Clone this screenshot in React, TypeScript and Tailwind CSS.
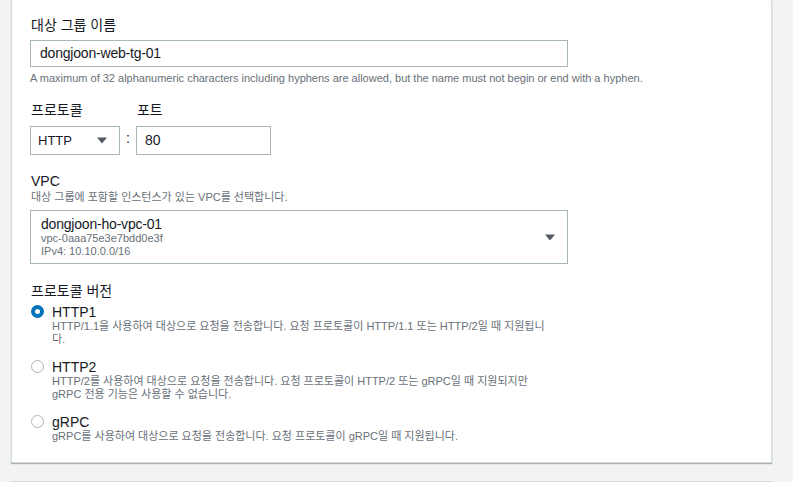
const font = { fontFamily: '"Liberation Sans", "Noto Sans CJK KR", sans-serif' }

function Caret() {
  return (
    <svg width="10" height="7" viewBox="0 0 10 7" className="shrink-0">
      <path d="M0 0.5 L10 0.5 L5 6.5 Z" fill="#545b64" />
    </svg>
  )
}

function Radio({ checked }: { checked?: boolean }) {
  return checked ? (
    <span className="mt-[1px] block h-[13px] w-[13px] shrink-0 rounded-full border-[4px] border-[#0073bb] bg-white" />
  ) : (
    <span className="mt-[1px] block h-[13px] w-[13px] shrink-0 rounded-full border border-[#aab7b8] bg-white" />
  )
}

const versions = [
  {
    name: 'HTTP1',
    checked: true,
    desc: ['HTTP/1.1을 사용하여 대상으로 요청을 전송합니다. 요청 프로토콜이 HTTP/1.1 또는 HTTP/2일 때 지원됩니', '다.'],
  },
  {
    name: 'HTTP2',
    desc: ['HTTP/2를 사용하여 대상으로 요청을 전송합니다. 요청 프로토콜이 HTTP/2 또는 gRPC일 때 지원되지만', 'gRPC 전용 기능은 사용할 수 없습니다.'],
  },
  {
    name: 'gRPC',
    desc: ['gRPC를 사용하여 대상으로 요청을 전송합니다. 요청 프로토콜이 gRPC일 때 지원됩니다.'],
  },
]

export default function App() {
  return (
    <div className="h-[482px] w-[793px] overflow-hidden bg-[#f2f3f3] pl-[11px] text-[#16191f]" style={font}>
      <div className="w-[761px] border-x border-b border-[#d5dbdb] bg-white pb-[19px] pl-[18px] shadow-[0_1px_1px_rgba(0,28,36,0.3)]">
        <div className="pt-[15px]">
          <p className="pl-[1px] text-[14px] leading-[20px]">대상 그룹 이름</p>
          <div className="mt-[5px] flex h-[27px] w-[538px] items-center border border-[#aab7b8] px-[9px] text-[14px] tracking-[-0.2px]">
            dongjoon-web-tg-01
          </div>
          <p className="mt-[4px] text-[11px] leading-[14px] text-[#687078]">
            A maximum of 32 alphanumeric characters including hyphens are allowed, but the name must not begin or end with a hyphen.
          </p>
        </div>

        <div className="mt-[15px] flex items-end gap-[6px]">
          <div>
            <p className="pl-[1px] text-[14px] leading-[20px]">프로토콜</p>
            <div className="mt-[6px] flex h-[29px] w-[90px] items-center justify-between border border-[#aab7b8] pl-[7px] pr-[12px] text-[13px]">
              HTTP
              <Caret />
            </div>
          </div>
          <span className="pb-[6px] text-[14px]">:</span>
          <div>
            <p className="pl-[1px] text-[14px] leading-[20px]">포트</p>
            <div className="mt-[6px] flex h-[29px] w-[135px] items-center border border-[#aab7b8] px-[8px] text-[14px]">
              80
            </div>
          </div>
        </div>

        <div className="mt-[17px] pl-[1px]">
          <p className="text-[14px] leading-[18px]">VPC</p>
          <p className="text-[11px] leading-[14px] text-[#687078]">대상 그룹에 포함할 인스턴스가 있는 VPC를 선택합니다.</p>
          <div className="-ml-[1px] mt-[6px] flex h-[54px] w-[538px] items-center justify-between border border-[#aab7b8] pl-[10px] pr-[12px]">
            <div>
              <p className="text-[14px] leading-[16px] tracking-[-0.2px]">dongjoon-ho-vpc-01</p>
              <p className="text-[11px] leading-[13px] text-[#687078]">vpc-0aaa75e3e7bdd0e3f</p>
              <p className="text-[11px] leading-[13px] text-[#687078]">IPv4: 10.10.0.0/16</p>
            </div>
            <Caret />
          </div>
        </div>

        <div className="mt-[17px]">
          <p className="pl-[1px] text-[14px] leading-[20px]">프로토콜 버전</p>
          <div className="mt-[3px] flex flex-col gap-[13px]">
            {versions.map((v) => (
              <div key={v.name} className="flex gap-[8px] pl-[1px]">
                <Radio checked={v.checked} />
                <div>
                  <p className="text-[14px] leading-[16px]">{v.name}</p>
                  {v.desc.map((d) => (
                    <p key={d} className="text-[11px] leading-[13px] text-[#687078]">{d}</p>
                  ))}
                </div>
              </div>
            ))}
          </div>
        </div>
      </div>
      <div className="mt-[18px] h-[40px] w-[761px] border border-[#d5dbdb] bg-white" />
    </div>
  )
}
